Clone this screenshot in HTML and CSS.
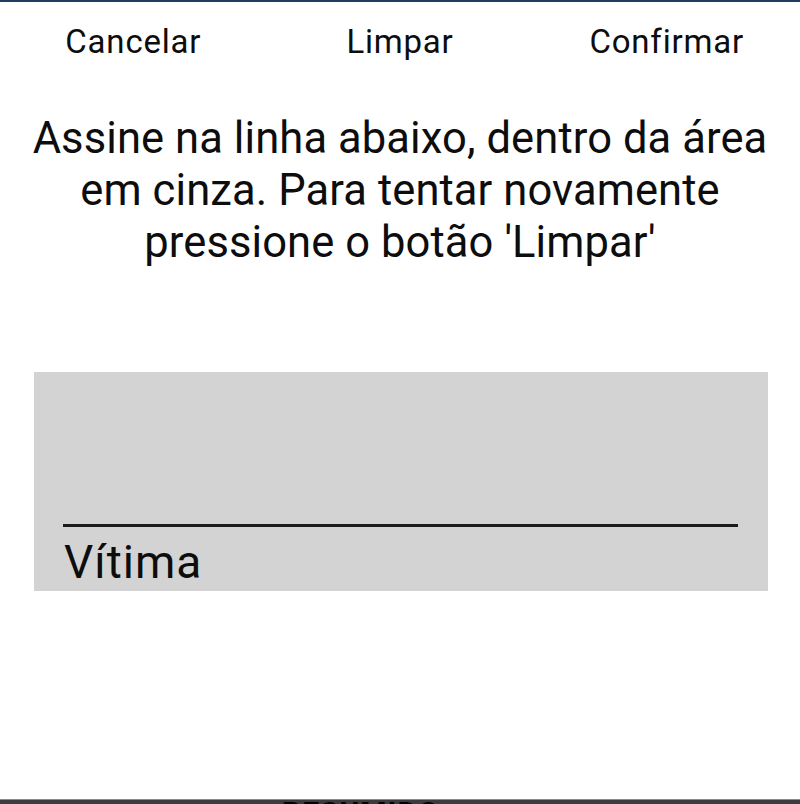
FILE: index.html
```html
<!DOCTYPE html>
<html lang="pt">
<head>
<meta charset="utf-8">
<link rel="stylesheet" href="styles.css">
</head>
<body>
<div class="screen">
  <div class="topbar"></div>
  <div class="dialog">
    <div class="actions">
      <div class="action">Cancelar</div>
      <div class="action">Limpar</div>
      <div class="action">Confirmar</div>
    </div>
    <p class="instructions">Assine na linha abaixo, dentro da área em cinza. Para tentar novamente pressione o botão 'Limpar'</p>
    <div class="pad">
      <div class="sign-line"></div>
      <div class="sign-label">Vítima</div>
    </div>
  </div>
  <div class="behind"><span class="behind-text">RESUMIDO ▼</span></div>
</div>
</body>
</html>
```

FILE: styles.css
```css
html, body {
  margin: 0;
  padding: 0;
  background: #ffffff;
}
.screen {
  width: 800px;
  height: 804px;
  display: flex;
  flex-direction: column;
  overflow: hidden;
  font-family: Roboto, "Noto Sans", sans-serif;
  color: #0d0d0d;
}
.topbar {
  height: 2px;
  background: #1f3d5c;
  flex: none;
}
.dialog {
  flex: 1;
  background: #ffffff;
  display: flex;
  flex-direction: column;
}
.actions {
  display: flex;
  padding-top: 20px;
}
.action {
  flex: 1;
  text-align: center;
  font-size: 33px;
  line-height: 40px;
  letter-spacing: 0.8px;
}
.instructions {
  margin: 51px 28px 0;
  font-size: 43.5px;
  line-height: 52px;
  letter-spacing: 0.1px;
  text-align: center;
}
.pad {
  margin: 103px 32px 0 34px;
  height: 219px;
  background: #d3d3d3;
  padding: 152px 30px 0 29px;
  box-sizing: border-box;
}
.sign-line {
  height: 3px;
  background: #1c1c1c;
}
.sign-label {
  font-size: 46px;
  line-height: 70px;
  letter-spacing: 1px;
  padding-left: 1px;
}
.behind {
  flex: none;
  height: 4px;
  background: #3c3c3c;
  border-top: 1px solid #8a8a8a;
  overflow: hidden;
  position: relative;
}
.behind-text {
  position: absolute;
  left: 282px;
  top: -7px;
  font-size: 30px;
  font-weight: 700;
  color: #000;
  line-height: 40px;
  letter-spacing: 1px;
}
```
